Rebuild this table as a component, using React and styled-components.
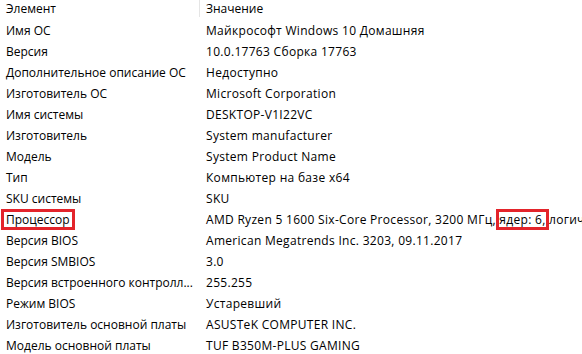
import React from "react";
import styled, { createGlobalStyle } from "styled-components";

const Global = createGlobalStyle`
  html, body { margin: 0; padding: 0; background: #fff; }
  body { font-family: "Open Sans", "Noto Sans", sans-serif; }
`;

const List = styled.div`
  width: 582px;
  height: 354px;
  overflow: hidden;
  background: #fff;
  color: #000;
  font-size: 12px;
`;

const Header = styled.div`
  display: grid;
  grid-template-columns: 200px 1fr;
  height: 20px;
  line-height: 17px;
`;

const HeadCell = styled.div`
  padding-left: 6px;
  white-space: nowrap;
  border-right: ${(p) => (p.$sep ? "1px solid #e5e5e5" : "none")};
  height: 17px;
`;

const Row = styled.div`
  display: grid;
  grid-template-columns: 200px 1fr;
  height: 21px;
  line-height: 21px;
`;

const Cell = styled.div`
  padding-left: 6px;
  white-space: nowrap;
  overflow: hidden;
  letter-spacing: ${(p) => p.$ls || 0}px;
`;

const Mark = styled.span`
  display: inline-block;
  padding: 0 ${(p) => p.$pad}px;
  margin: 0 -${(p) => p.$pad}px;
  outline: 3px solid #e3242b;
  outline-offset: -3px;
  height: 21px;
`;

const rows = [
  ["Имя ОС", "Майкрософт Windows 10 Домашняя"],
  ["Версия", "10.0.17763 Сборка 17763"],
  ["Дополнительное описание ОС", "Недоступно"],
  ["Изготовитель ОС", "Microsoft Corporation"],
  ["Имя системы", "DESKTOP-V1I22VC"],
  ["Изготовитель", "System manufacturer"],
  ["Модель", "System Product Name"],
  ["Тип", "Компьютер на базе x64"],
  ["SKU системы", "SKU"],
  ["CPU", null],
  ["Версия BIOS", "American Megatrends Inc. 3203, 09.11.2017"],
  ["Версия SMBIOS", "3.0"],
  ["Версия встроенного контролл...", "255.255"],
  ["Режим BIOS", "Устаревший"],
  ["Изготовитель основной платы", "ASUSTeK COMPUTER INC."],
  ["Модель основной платы", "TUF B350M-PLUS GAMING"],
];

export default function App() {
  return (
    <>
      <Global />
      <List>
        <Header>
          <HeadCell $sep>Элемент</HeadCell>
          <HeadCell>Значение</HeadCell>
        </Header>
        {rows.map(([k, v]) =>
          k === "CPU" ? (
            <Row key={k}>
              <Cell>
                <Mark $pad={5}>Процессор</Mark>
              </Cell>
              <Cell $ls={0.3}>
                AMD Ryzen 5 1600 Six-Core Processor, 3200 МГц,
                <Mark $pad={0}>&nbsp;ядер: 6,&nbsp;</Mark>
                логических процессоров: 12
              </Cell>
            </Row>
          ) : (
            <Row key={k}>
              <Cell>{k}</Cell>
              <Cell $ls={0.3}>{v}</Cell>
            </Row>
          )
        )}
      </List>
    </>
  );
}
